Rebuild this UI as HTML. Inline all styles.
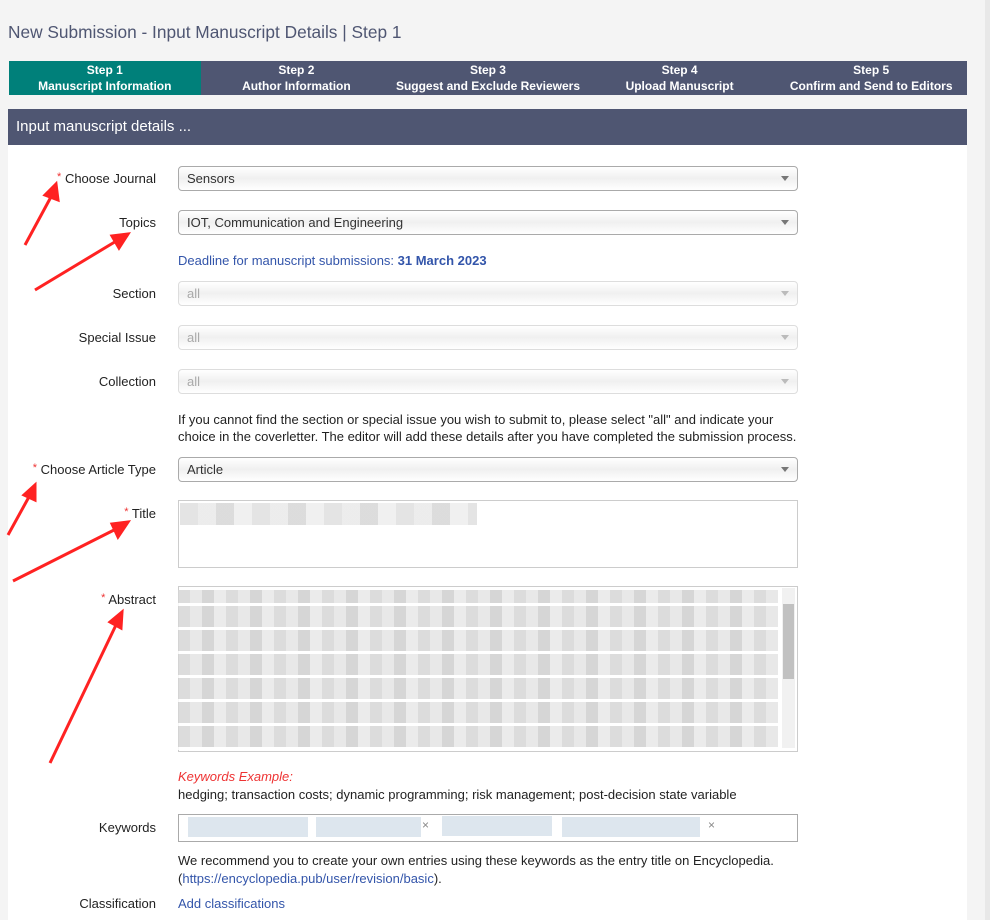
<!DOCTYPE html>
<html><head><meta charset="utf-8"><style>
body{margin:0;width:990px;height:920px;background:#f4f4f4;font-family:"Liberation Sans",Arial,sans-serif;position:relative;overflow:hidden;font-size:13px;color:#222}
.a{position:absolute}
h1{position:absolute;left:8px;top:22px;margin:0;font-weight:normal;font-size:17.3px;color:#4f5672}
.steps{position:absolute;left:9px;top:61px;width:958px;height:34px;background:#4f5672;display:flex}
.steps div{flex:1;color:#fff;font-weight:bold;font-size:12px;text-align:center;line-height:16px;padding-top:1px}
.steps div.on{background:#00807a}
.hdr{position:absolute;left:8px;top:109px;width:959px;height:36px;background:#4f5672;color:#fff;font-size:15px;line-height:36px;text-indent:8px}
.panel{position:absolute;left:8px;top:145px;width:959px;height:775px;background:#fff}
.lbl{position:absolute;right:834px;text-align:right;font-size:13px;color:#222;white-space:nowrap}
.lbl b{color:#e33;font-weight:normal;font-size:11px;vertical-align:top}
.sel{position:absolute;left:178px;width:610px;height:23px;border:1px solid #aaa;border-radius:4px;background:linear-gradient(#fff 0%,#f0f0f0 50%,#fff 100%);font-size:13px;line-height:23px;padding-left:8px;color:#333}
.sel:after{content:"";position:absolute;right:8px;top:9px;border:4px solid transparent;border-top:5px solid #777}
.sel.dis{color:#aaa;border-color:#ddd}
.sel.dis:after{border-top-color:#bbb}
.ta{position:absolute;left:178px;width:618px;border:1px solid #ccc;background:#fff}
.blur{position:absolute;background:repeating-linear-gradient(90deg,#ddd 0 18px,#e8e8e8 18px 36px,#d4d4d4 36px 54px,#ececec 54px 72px)}
.t{position:absolute;left:178px;font-size:13px;color:#222}
a{color:#3355aa;text-decoration:none}
</style></head><body>
<h1>New Submission - Input Manuscript Details | Step 1</h1>
<div class="steps"><div class="on">Step 1<br>Manuscript Information</div><div>Step 2<br>Author Information</div><div>Step 3<br>Suggest and Exclude Reviewers</div><div>Step 4<br>Upload Manuscript</div><div>Step 5<br>Confirm and Send to Editors</div></div>
<div class="hdr">Input manuscript details ...</div>
<div class="panel"></div>
<div class="a" style="left:985px;top:0;width:5px;height:920px;background:#e8e8e8"></div>

<div class="lbl" style="top:171px"><b>*</b> Choose Journal</div>
<div class="sel" style="top:166px">Sensors</div>
<div class="lbl" style="top:215px">Topics</div>
<div class="sel" style="top:210px">IOT, Communication and Engineering</div>
<div class="t" style="top:253px;color:#3355aa">Deadline for manuscript submissions: <b>31 March 2023</b></div>
<div class="lbl" style="top:286px">Section</div>
<div class="sel dis" style="top:281px">all</div>
<div class="lbl" style="top:330px">Special Issue</div>
<div class="sel dis" style="top:325px">all</div>
<div class="lbl" style="top:374px">Collection</div>
<div class="sel dis" style="top:369px">all</div>
<div class="t" style="top:411px;line-height:17px">If you cannot find the section or special issue you wish to submit to, please select "all" and indicate your<br>choice in the coverletter. The editor will add these details after you have completed the submission process.</div>
<div class="lbl" style="top:462px"><b>*</b> Choose Article Type</div>
<div class="sel" style="top:457px">Article</div>
<div class="lbl" style="top:506px"><b>*</b> Title</div>
<div class="ta" style="top:500px;height:66px"></div>
<div class="blur" style="left:180px;top:503px;width:297px;height:22px;opacity:.8"></div>
<div class="lbl" style="top:592px"><b>*</b> Abstract</div>
<div class="ta" style="top:586px;height:164px"></div>
<div class="blur" style="left:178px;top:590px;width:600px;height:160px;background:repeating-linear-gradient(0deg,#fff 0 3px,transparent 3px 24px),repeating-linear-gradient(90deg,#d6d6d6 0 12px,#e4e4e4 12px 24px,#cfcfcf 24px 36px,#e8e8e8 36px 48px);opacity:.85"></div>
<div class="a" style="left:782px;top:588px;width:13px;height:160px;background:#f1f1f1"><div style="margin:16px 1px;height:75px;background:#c1c1c1"></div></div>
<div class="t" style="top:769px;color:#e33;font-style:italic">Keywords Example:</div>
<div class="t" style="top:787px">hedging; transaction costs; dynamic programming; risk management; post-decision state variable</div>
<div class="lbl" style="top:820px">Keywords</div>
<div class="ta" style="top:814px;height:26px;border-color:#aaa"></div>
<div class="blur" style="left:188px;top:817px;width:120px;height:20px;background:#dde6ee"></div>
<div class="blur" style="left:316px;top:817px;width:105px;height:20px;background:#dde6ee"></div>
<div class="blur" style="left:442px;top:816px;width:110px;height:20px;background:#dde6ee"></div>
<div class="blur" style="left:562px;top:817px;width:138px;height:20px;background:#dde6ee"></div>
<div class="a" style="left:422px;top:818px;color:#888;font-size:12px">×</div>
<div class="a" style="left:708px;top:818px;color:#888;font-size:12px">×</div>
<div class="t" style="top:852px;line-height:18px">We recommend you to create your own entries using these keywords as the entry title on Encyclopedia.<br>(<a>https://encyclopedia.pub/user/revision/basic</a>).</div>
<div class="lbl" style="top:896px">Classification</div>
<div class="t" style="top:896px"><a>Add classifications</a></div>

<svg class="a" style="left:0;top:0" width="990" height="920">
<g stroke="#f22" stroke-width="3" fill="#f22">
<line x1="25" y1="245" x2="52" y2="195"/><polygon points="56,184 45,195 58,200"/>
<line x1="35" y1="290" x2="118" y2="240"/><polygon points="128,234 112,236 119,248"/>
<line x1="8" y1="535" x2="30" y2="495"/><polygon points="35,485 24,495 35,500"/>
<line x1="13" y1="581" x2="118" y2="528"/><polygon points="128,522 112,524 118,537"/>
<line x1="50" y1="763" x2="116" y2="625"/><polygon points="122,612 110,622 121,628"/>
</g></svg>
</body></html>
